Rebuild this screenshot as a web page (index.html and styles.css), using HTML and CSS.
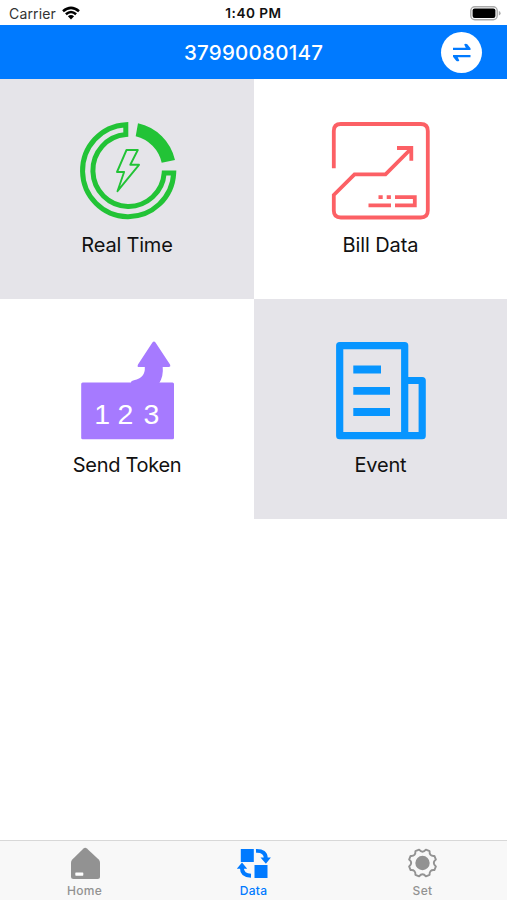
FILE: index.html
```html
<!DOCTYPE html>
<html lang="en">
<head>
<meta charset="utf-8">
<meta name="viewport" content="width=device-width">
<title>Meter data</title>
<link rel="stylesheet" href="styles.css">
</head>
<body>
<div class="app">
  <div class="status">
    <div class="carrier"><span>Carrier</span>
      <svg width="18" height="14" viewBox="0 0 18 14" fill="none" stroke="#000" stroke-width="2.6"><path d="M1 5.2Q9-1.6 17 5.2M3.9 8.2Q9 3.8 14.1 8.2"/><path d="M9 13.4L5.9 10.3Q9 7.7 12.1 10.3Z" fill="#000" stroke="none"/></svg>
    </div>
    <time>1:40 PM</time>
    <svg class="battery" width="32" height="15" viewBox="0 0 32 15"><rect x=".8" y=".8" width="26.4" height="13" rx="4" fill="#fff" stroke="#aaa" stroke-width="1.4"/><rect x="2.6" y="2.5" width="22.8" height="9.6" rx="2" fill="#000"/><path d="M28.8 5Q30.6 5.5 30.6 7.3T28.8 9.6Z" fill="#aaa"/></svg>
  </div>
  <header class="nav">
    <h1>37990080147</h1>
    <button class="swap" aria-label="Switch meter"><svg width="41" height="41" viewBox="0 0 41 41" fill="#007aff"><path d="M12 15.8H24.8L23.2 12.6Q24.5 11 26.3 12.2L29.5 16.3V18H12ZM29.5 25.2H16.7L18.3 28.4Q17 30 15.2 28.8L12 24.7V23H29.5Z"/></svg></button>
  </header>
  <main class="grid">
    <section class="tile shaded">
      <svg width="110" height="110" viewBox="71.5 115 110 110" fill="none" stroke="#22c336">
        <path stroke-width="5" d="M125.3 124.7A45.6 46 0 1 0 173.2 173H163.7A35.7 36 0 1 1 125.3 134.5Z"/>
        <path fill="#22c336" stroke="none" d="M137.5 123.2A48.5 48.5 0 0 1 174.5 160L161.2 162.8A35 35 0 0 0 135.2 136.3Z"/>
        <path stroke-width="1.9" stroke-linejoin="round" d="M126 150H137.3L129.8 164.8H138.5L117 191.2L123.6 172H116.5Z"/>
      </svg>
      <span class="real">Real Time</span>
    </section>
    <section class="tile">
      <svg width="110" height="110" viewBox="326 115 110 110" fill="none" stroke="#fc6065" stroke-width="3.8">
        <path d="M333.8 168.3V131Q333.8 124 340.8 124H420.8Q427.8 124 427.8 131V210.5Q427.8 217.5 420.8 217.5H340.8Q333.8 217.5 333.8 210.5V195L354.5 174.3H385.5L411.3 148.5M397 148H411.3V160.7"/>
        <path d="M378.5 197.2h4.2M386.7 197.2h4.2M368.5 205.3H391M395 197.2H414.8V205.3H395"/>
      </svg>
      <span class="bill">Bill Data</span>
    </section>
    <section class="tile">
      <svg width="110" height="110" viewBox="72 335 110 110">
        <rect x="81.2" y="382.5" width="92.8" height="56.7" rx="1.5" fill="#a67aff"/>
        <path fill="#a67aff" d="M152.4 342.4Q154 340.7 155.5 342.4L170 364.5Q171 367 168.5 367H162.7Q163.7 376 159 383.5H131Q130.5 380.8 134 380.2Q145.5 378 144.8 367H139Q136.8 367 138 364.4Z"/>
        <g class="digits"><text x="102.3" y="424.4">1</text><text x="125.5" y="424.4">2</text><text x="151.5" y="424.4">3</text></g>
      </svg>
      <span class="send">Send Token</span>
    </section>
    <section class="tile shaded">
      <svg width="110" height="110" viewBox="326 335 110 110" fill="none" stroke="#0795ff" stroke-width="7.2" stroke-linejoin="round">
        <path d="M339.7 345.6H404.7V435.7H339.7ZM404.7 380.5H422.2V435.7H404.7"/>
        <path stroke-width="7.8" d="M353.3 369.5H381M353.3 390.8H390M353.3 412H390"/>
      </svg>
      <span class="event">Event</span>
    </section>
  </main>
  <nav class="tabs">
    <a class="tab">
      <svg width="36" height="36" viewBox="66.5 845 36 36"><path fill="#929292" d="M83 848.4Q84.7 847.2 86.4 848.4L98.2 859.5Q99.5 860.8 99.5 862.5V876.5Q99.5 879 97 879H73Q70.5 879 70.5 876.5V862.5Q70.5 860.8 71.8 859.5Z"/><rect x="74.8" y="872.5" width="8" height="3.2" rx=".6" fill="#fff"/></svg>
      <span>Home</span>
    </a>
    <a class="tab active">
      <svg width="36" height="36" viewBox="236 845 36 36"><path fill="#007aff" d="M240.8 849h13v13h-13zM254.5 865h13v13h-13zM260.5 857.5h10.4l-5 6.2zM236.8 868.8h10.4l-5.2-6.2z"/><path d="M256 850.9Q265.8 850.5 265.8 858.5M251 875.8Q241.7 875.5 241.9 867.5" fill="none" stroke="#007aff" stroke-width="3.9"/></svg>
      <span>Data</span>
    </a>
    <a class="tab">
      <svg width="36" height="36" viewBox="-17.5 -18 36 36"><circle r="7.2" fill="#929292"/><path fill="none" stroke="#929292" stroke-width="1.9" stroke-linejoin="round" d="M-3.4-13.4Q0-9.2 3.4-13.4L7.1-11.9Q6.6-6.6 11.9-7.1L13.4-3.4Q9.2 0 13.4 3.4L11.9 7.1Q6.6 6.6 7.1 11.9L3.4 13.4Q0 9.2-3.4 13.4L-7.1 11.9Q-6.6 6.6-11.9 7.1L-13.4 3.4Q-9.2 0-13.4-3.4L-11.9-7.1Q-6.6-6.6-7.1-11.9Z"/></svg>
      <span>Set</span>
    </a>
  </nav>
</div>
</body>
</html>
```
FILE: styles.css
```css
* { box-sizing: border-box; }
body { margin: 0; background: #fff; color: #111; font-family: Inter, "Liberation Sans", sans-serif; }
.app { width: 507px; height: 900px; display: flex; flex-direction: column; }
.status { height: 25px; display: grid; grid-template-columns: 1fr auto 1fr; align-items: center; padding: 1px 5px 0 9px; font-size: 14px; }
.carrier { display: flex; align-items: center; gap: 6px; color: #333; letter-spacing: .15px; }
.status time { font-size: 13.6px; font-weight: 600; letter-spacing: .5px; margin-left: -4px; }
.battery { justify-self: end; }
.nav { height: 54px; background: #007aff; display: grid; grid-template-columns: 1fr auto 1fr; align-items: center; padding: 0 25px; }
.nav h1 { grid-column: 2; margin: 1px 0 0; color: #fff; font-size: 20.5px; font-weight: 500; letter-spacing: .25px; }
.swap { justify-self: end; width: 41px; height: 41px; padding: 0; border: 0; border-radius: 50%; background: #fff; }
.swap svg { display: block; }
.grid { display: grid; grid-template-columns: 254px 253px; grid-template-rows: 220px 220px; flex: 1; align-content: start; }
.tile { display: flex; flex-direction: column; align-items: center; padding-top: 36px; font-size: 20px; line-height: 26px; }
.tile span { margin-top: 7px; letter-spacing: -.2px; }
.tile .bill { letter-spacing: -.1px; }
.tile .send { letter-spacing: -.3px; }
.shaded { background: #e5e4e9; }
.digits { font-family: "Liberation Sans", sans-serif; font-size: 28.5px; fill: #fff; text-anchor: middle; }
.tabs { height: 60px; border-top: 1px solid #d8d8d8; background: #f8f8f8; display: grid; grid-template-columns: repeat(3, 1fr); }
.tab { display: flex; flex-direction: column; align-items: center; padding-top: 4px; color: #929292; font-size: 12px; font-weight: 500; line-height: 16px; letter-spacing: .3px; }
.tab span { margin-top: 2px; }
.active { color: #007aff; }
```
